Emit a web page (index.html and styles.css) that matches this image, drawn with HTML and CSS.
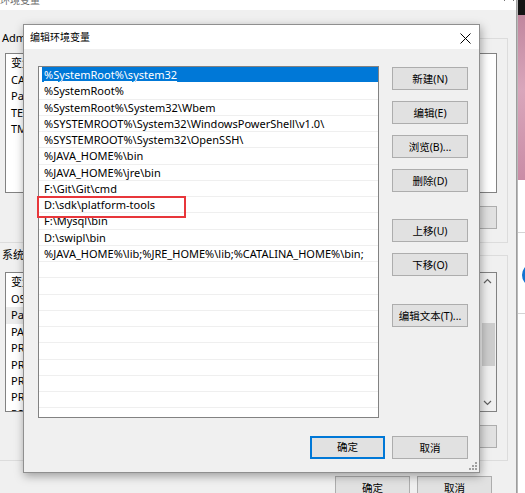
FILE: index.html
```html
<!DOCTYPE html>
<html lang="zh-CN">
<head>
<meta charset="utf-8">
<title>编辑环境变量</title>
<link rel="stylesheet" href="styles.css">
</head>
<body>
<div class="screen">
  <div class="wallpaper">
    <div class="wp-black"></div>
    <div class="wp-pink"></div>
    <div class="wp-app">
      <div class="wp-line"></div>
      <div class="wp-logo"></div>
      <div class="wp-line"></div>
    </div>
  </div>

  <div class="bgwin">
    <div class="bg-title">
      <span class="bg-title-text">环境变量</span>
      <svg class="bg-close" width="10" height="10" viewBox="0 0 10 10"><path d="M0 0L10 10M10 0L0 10" stroke="#777" stroke-width="1"/></svg>
    </div>
    <div class="bg-body">
      <fieldset class="group group-user">
        <legend>Administrator 的用户变量(U)</legend>
        <div class="bg-list">
          <div class="bg-row head">变量</div>
          <div class="bg-row">CATALINA_HOME</div>
          <div class="bg-row">Path</div>
          <div class="bg-row">TEMP</div>
          <div class="bg-row">TMP</div>
        </div>
        <div class="bg-buttons">
          <button class="btn">新建(N)...</button>
          <button class="btn">编辑(E)...</button>
          <button class="btn">删除(D)</button>
        </div>
      </fieldset>
      <fieldset class="group group-sys">
        <legend>系统变量(S)</legend>
        <div class="bg-list sys-list">
          <div class="bg-rows">
            <div class="bg-row head">变量</div>
            <div class="bg-row">OS</div>
            <div class="bg-row inactive-sel">Path</div>
            <div class="bg-row">PATHEXT</div>
            <div class="bg-row">PROCESSOR_ARCHITECTURE</div>
            <div class="bg-row">PROCESSOR_IDENTIFIER</div>
            <div class="bg-row">PROCESSOR_LEVEL</div>
            <div class="bg-row">PROCESSOR_REVISION</div>
            <div class="bg-row">PSModulePath</div>
          </div>
          <div class="vscroll">
            <svg class="arrow" width="15" height="17" viewBox="0 0 15 17"><path d="M4 10L7.5 6.5L11 10" fill="none" stroke="#606060" stroke-width="1.2"/></svg>
            <div class="track"><div class="thumb"></div></div>
            <svg class="arrow" width="15" height="17" viewBox="0 0 15 17"><path d="M4 7L7.5 10.5L11 7" fill="none" stroke="#606060" stroke-width="1.2"/></svg>
          </div>
        </div>
        <div class="bg-buttons">
          <button class="btn">新建(W)...</button>
          <button class="btn">编辑(I)...</button>
          <button class="btn">删除(L)</button>
        </div>
      </fieldset>
      <div class="bg-footer">
        <button class="btn btn-foot">确定</button>
        <button class="btn btn-foot">取消</button>
      </div>
    </div>
  </div>

  <div class="dialog">
    <div class="dlg-title">
      <span class="dlg-title-text">编辑环境变量</span>
      <svg class="dlg-close" width="11" height="11" viewBox="0 0 11 11"><path d="M0.5 0.5L10.5 10.5M10.5 0.5L0.5 10.5" stroke="#000" stroke-width="1"/></svg>
    </div>
    <div class="dlg-body">
      <div class="dlg-main">
        <div class="path-list">
          <div class="row sel"><span class="cell">%SystemRoot%\system32</span></div>
          <div class="row"><span class="cell">%SystemRoot%</span></div>
          <div class="row"><span class="cell">%SystemRoot%\System32\Wbem</span></div>
          <div class="row"><span class="cell">%SYSTEMROOT%\System32\WindowsPowerShell\v1.0\</span></div>
          <div class="row"><span class="cell">%SYSTEMROOT%\System32\OpenSSH\</span></div>
          <div class="row"><span class="cell">%JAVA_HOME%\bin</span></div>
          <div class="row"><span class="cell">%JAVA_HOME%\jre\bin</span></div>
          <div class="row"><span class="cell">F:\Git\Git\cmd</span></div>
          <div class="row"><span class="cell">D:\sdk\platform-tools</span></div>
          <div class="row"><span class="cell">F:\Mysql\bin</span></div>
          <div class="row"><span class="cell">D:\swipl\bin</span></div>
          <div class="row"><span class="cell">%JAVA_HOME%\lib;%JRE_HOME%\lib;%CATALINA_HOME%\bin;</span></div>
          <div class="row"></div>
          <div class="row"></div>
          <div class="row"></div>
          <div class="row"></div>
          <div class="row"></div>
          <div class="row"></div>
          <div class="row"></div>
          <div class="row"></div>
          <div class="row"></div>
          <div class="mark"></div>
        </div>
        <div class="side-buttons">
          <button class="btn">新建(N)</button>
          <button class="btn">编辑(E)</button>
          <button class="btn">浏览(B)...</button>
          <button class="btn">删除(D)</button>
          <button class="btn gap-big">上移(U)</button>
          <button class="btn">下移(O)</button>
          <button class="btn gap-big2">编辑文本(T)...</button>
        </div>
      </div>
      <div class="dlg-footer">
        <button class="btn btn-default">确定</button>
        <button class="btn btn-cancel">取消</button>
      </div>
    </div>
    <svg class="grip" width="8" height="8" viewBox="0 0 8 8"><g fill="#a0a0a0"><rect x="6" y="0" width="2" height="2"/><rect x="3" y="3" width="2" height="2"/><rect x="6" y="3" width="2" height="2"/><rect x="0" y="6" width="2" height="2"/><rect x="3" y="6" width="2" height="2"/><rect x="6" y="6" width="2" height="2"/></g></svg>
  </div>
</div>
</body>
</html>
```

FILE: styles.css
```css
* { box-sizing: border-box; }
html, body { margin: 0; padding: 0; }
body {
  width: 525px;
  height: 493px;
  overflow: hidden;
  background: #fff;
  font-family: "Noto Sans", "Noto Sans CJK SC", sans-serif;
  font-size: 11px;
  color: #000;
}
.screen { position: relative; width: 525px; height: 493px; overflow: hidden; }

/* desktop strip on the right */
.wallpaper {
  position: absolute; left: 517px; top: 0; width: 8px; height: 493px;
  display: flex; flex-direction: column;
  border-left: 1px solid #b9b9b9;
}
.wp-black { height: 15px; background: #141414; }
.wp-pink { height: 165px; background: linear-gradient(#c0869d, #d9a6bb 45%, #c98ca5); }
.wp-app { flex: 1; background: #fff; padding-top: 52px; }
.wp-line { height: 1px; background: #d4d4d4; }
.wp-logo {
  width: 16px; height: 20px; margin: 32px 0 28px 4px;
  border: 3px solid #1273d1; border-radius: 50%;
}

/* background window */
.bgwin {
  position: absolute; left: -8px; top: -20px; width: 525px; height: 540px;
  background: #f0f0f0; border-right: 1px solid #9d9d9d;
}
.bg-title {
  height: 30px; background: #fff;
  display: flex; justify-content: space-between; align-items: flex-start;
  padding: 14px 2px 0 8px;
}
.bg-title-text { font-size: 10px; line-height: 12px; color: #6d6d6d; }
.bg-close { margin-top: -3px; }
.bg-body { padding: 0 8px 0 2px; }
.group {
  margin: 0; border: 1px solid #dcdcdc;
  padding: 8px 10px 13px 10px; min-width: 0;
}
.group legend { margin-left: -5px; padding: 0 2px; font-size: 11px; line-height: 14px; }
.group-user { margin-top: 21px; }
.group-sys { margin-top: 5px; padding-top: 10px; padding-bottom: 12px; }
.bg-list {
  height: 140px; background: #fff; border: 1px solid #828282;
  overflow: hidden;
}
.sys-list { display: flex; }
.bg-rows { flex: 1; }
.bg-row { height: 16.4px; line-height: 16px; padding-left: 5px; white-space: nowrap; }
.bg-row.head { height: 18px; line-height: 18px; }
.bg-row.inactive-sel { background: #ececec; }
.vscroll { width: 16px; display: flex; flex-direction: column; background: #f0f0f0; }
.vscroll .arrow { display: block; flex: none; }
.track { flex: 1; padding: 33px 1px 0 2px; }
.thumb { height: 43px; background: #cdcdcd; }
.bg-buttons { margin-top: 13px; display: flex; justify-content: flex-end; gap: 7px; }
.bg-buttons .btn { width: 75px; }
.bg-footer { margin-top: 15px; padding-right: 16px; display: flex; justify-content: flex-end; gap: 7px; }
.btn-foot { width: 75px; }

/* buttons */
.btn {
  height: 23px; padding: 0;
  background: #e1e1e1; border: 1px solid #adadad; border-radius: 0;
  font-family: "Noto Sans", "Noto Sans CJK SC", sans-serif;
  font-size: 10.5px; line-height: 20px; color: #000;
}

/* edit dialog */
.dialog {
  position: absolute; left: 23px; top: 24px; width: 457px; height: 449px;
  background: #f0f0f0;
  border: 1px solid #8f8f8f;
  box-shadow: 1px 3px 9px rgba(0,0,0,0.35);
}
.dlg-title {
  height: 24px; background: #fff;
  display: flex; justify-content: space-between; align-items: center;
  padding: 0 8px 0 6px;
}
.dlg-title-text { font-size: 10px; line-height: 12px; }
.dlg-close { margin-top: 2px; }
.dlg-body { padding: 17px 11px 13px 14px; }
.dlg-main { display: grid; grid-template-columns: 341px 76px; column-gap: 13px; }
.path-list {
  position: relative;
  height: 352px; background: #fff; border: 1px solid #828282;
}
.row {
  height: 16.25px; border-bottom: 1px solid #efefef;
  padding-left: 3px; white-space: nowrap; overflow: hidden;
}
.cell { display: block; height: 100%; padding-left: 2px; line-height: 16px; }
.row.sel { border-bottom-color: #fff; }
.row.sel .cell {
  background: #0078d7; color: #fff;
  text-decoration: underline; text-underline-offset: 2px; text-decoration-thickness: 1px;
}
.mark {
  position: absolute; left: -2px; top: 129px; width: 149px; height: 22px;
  border: 2px solid #e8363b;
}
.side-buttons { display: flex; flex-direction: column; gap: 11px; padding-top: 1px; }
.side-buttons .gap-big { margin-top: 16px; }
.side-buttons .gap-big2 { margin-top: 17px; }
.dlg-footer { margin-top: 18px; display: flex; justify-content: flex-end; gap: 7px; }
.btn-default { width: 75px; border: 2px solid #0078d7; line-height: 19px; }
.btn-cancel { width: 76px; }
.grip { position: absolute; right: 2px; bottom: 2px; }
```
